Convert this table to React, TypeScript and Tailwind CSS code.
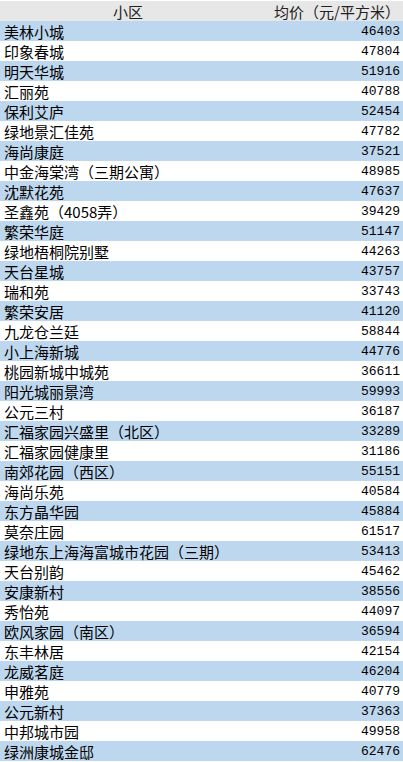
import React from "react";

const rows: [string, number][] = [
  ["美林小城", 46403],
  ["印象春城", 47804],
  ["明天华城", 51916],
  ["汇丽苑", 40788],
  ["保利艾庐", 52454],
  ["绿地景汇佳苑", 47782],
  ["海尚康庭", 37521],
  ["中金海棠湾（三期公寓）", 48985],
  ["沈默花苑", 47637],
  ["圣鑫苑（4058弄）", 39429],
  ["繁荣华庭", 51147],
  ["绿地梧桐院别墅", 44263],
  ["天台星城", 43757],
  ["瑞和苑", 33743],
  ["繁荣安居", 41120],
  ["九龙仓兰廷", 58844],
  ["小上海新城", 44776],
  ["桃园新城中城苑", 36611],
  ["阳光城丽景湾", 59993],
  ["公元三村", 36187],
  ["汇福家园兴盛里（北区）", 33289],
  ["汇福家园健康里", 31186],
  ["南郊花园（西区）", 55151],
  ["海尚乐苑", 40584],
  ["东方晶华园", 45884],
  ["莫奈庄园", 61517],
  ["绿地东上海海富城市花园（三期）", 53413],
  ["天台别韵", 45462],
  ["安康新村", 38556],
  ["秀怡苑", 44097],
  ["欧风家园（南区）", 36594],
  ["东丰林居", 42154],
  ["龙威茗庭", 46204],
  ["申雅苑", 40779],
  ["公元新村", 37363],
  ["中邦城市园", 49958],
  ["绿洲康城金邸", 62476],
];

export default function App() {
  return (
    <div className="w-[403px] h-[762px] overflow-hidden bg-white text-black font-['Noto_Sans_CJK_SC',sans-serif]">
      {/* header */}
      <div className="mt-px h-[20px] grid grid-cols-[256px_1fr] items-center bg-[#e7e7e7] text-[15px] leading-none text-[#222]">
        <div className="text-center">小区</div>
        <div className="text-right pr-[3px]">均价（元/平方米）</div>
      </div>
      {rows.map(([name, price], i) => (
        <div
          key={name}
          className={
            i % 2 === 0
              ? "h-[20px] flex items-center justify-between bg-[#bdd7ee] pl-[4px] pr-[3px]"
              : "h-[20px] flex items-center justify-between bg-white pl-[4px] pr-[3px]"
          }
        >
          <span className="text-[15px] leading-none whitespace-nowrap">{name}</span>
          <span className="text-[13px] leading-none font-['Liberation_Mono',monospace]">{price}</span>
        </div>
      ))}
    </div>
  );
}
